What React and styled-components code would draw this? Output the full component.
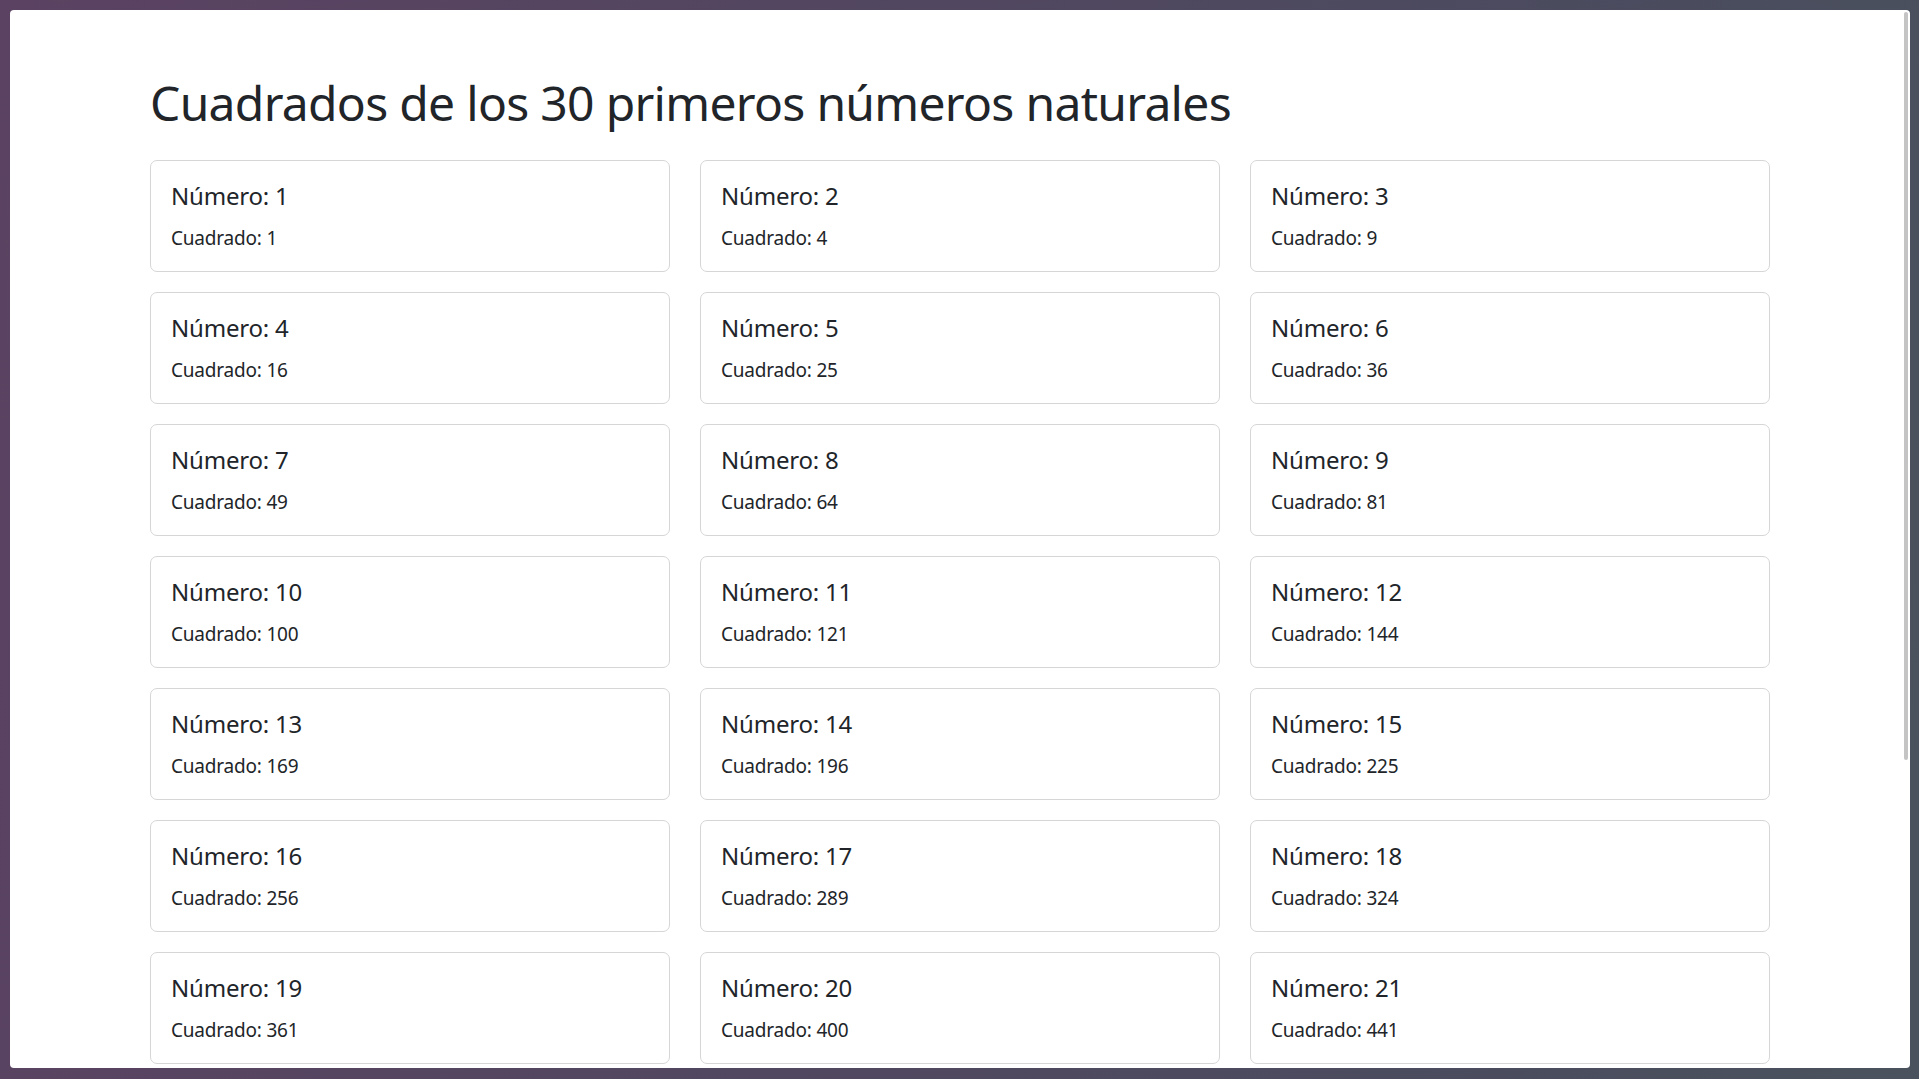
import React from "react";
import styled, { createGlobalStyle } from "styled-components";

const GlobalStyle = createGlobalStyle`
  html, body {
    margin: 0;
    padding: 0;
    height: 100%;
  }
  body {
    font-family: "Noto Sans", "Open Sans", sans-serif;
    color: #212529;
  }
`;

const Frame = styled.div`
  width: 1919px;
  height: 1079px;
  box-sizing: border-box;
  padding: 10px 9px 11px 10px;
  background: linear-gradient(100deg, #5b4262 0%, #514760 45%, #4a4c5e 80%, #4a535d 100%);
  overflow: hidden;
`;

const Window = styled.div`
  position: relative;
  height: 100%;
  background: #ffffff;
  border-radius: 4px;
  overflow: hidden;
`;

const ScrollThumb = styled.div`
  position: absolute;
  top: 2px;
  right: 2px;
  width: 4px;
  height: 748px;
  border-radius: 3px;
  background: #c4c4c4;
`;

const Container = styled.main`
  width: 1650px;
  margin: 0 auto;
  padding: 0 15px;
  box-sizing: border-box;
`;

const Title = styled.h1`
  margin: 63px 0 27px;
  font-size: 48px;
  font-weight: 400;
  line-height: 60px;
  letter-spacing: -0.7px;
`;

const Grid = styled.div`
  display: grid;
  grid-template-columns: repeat(3, 1fr);
  column-gap: 30px;
  row-gap: 20px;
`;

const Card = styled.div`
  border: 1px solid #d6d6d6;
  border-radius: 7px;
  padding: 20px 20px 18px;
`;

const CardTitle = styled.h5`
  margin: 0 0 12px;
  font-size: 24px;
  font-weight: 400;
  line-height: 30px;
  letter-spacing: -0.2px;
`;

const CardText = styled.p`
  margin: 0;
  font-size: 19px;
  line-height: 30px;
  letter-spacing: -0.2px;
`;

const numeros = Array.from({ length: 30 }, (_, i) => i + 1);

export default function App() {
  return (
    <>
      <GlobalStyle />
      <Frame>
        <Window>
          <Container>
            <Title>Cuadrados de los 30 primeros números naturales</Title>
            <Grid>
              {numeros.map((n) => (
                <Card key={n}>
                  <CardTitle>Número: {n}</CardTitle>
                  <CardText>Cuadrado: {n * n}</CardText>
                </Card>
              ))}
            </Grid>
          </Container>
          <ScrollThumb />
        </Window>
      </Frame>
    </>
  );
}
